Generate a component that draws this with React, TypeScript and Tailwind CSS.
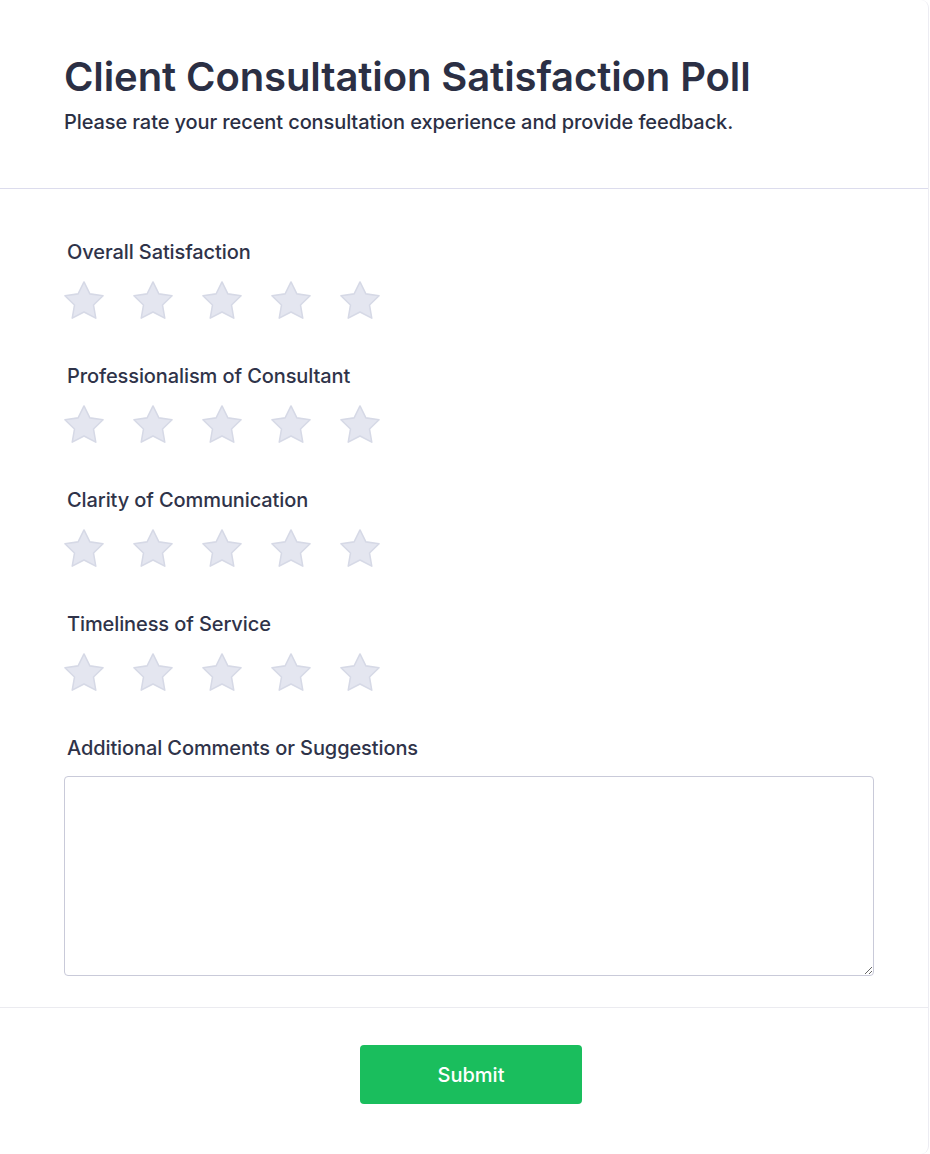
const questions = [
  'Overall Satisfaction',
  'Professionalism of Consultant',
  'Clarity of Communication',
  'Timeliness of Service',
];

const StarIcon = () => (
  <svg width="40" height="40" viewBox="1.5 1.5 21 21" className="shrink-0">
    <path
      d="M12 2l3.09 6.26L22 9.27l-5 4.87 1.18 6.88L12 17.77l-6.18 3.25L7 14.14 2 9.27l6.91-1.01L12 2z"
      fill="#e4e6f0"
      stroke="#d6d9e6"
      strokeWidth="0.8"
      strokeLinejoin="round"
    />
  </svg>
);

export default function App() {
  return (
    <div className="min-h-screen bg-white font-['Inter',sans-serif] text-[#2c3045]">
      <div className="w-[929px] rounded-lg border-r border-[#ececf2] bg-white">
        {/* Header */}
        <header className="pl-16 pr-[54px] pt-[53px] pb-[52px] border-b border-[#dcdced]">
          <h1 className="text-[40px] leading-[48px] font-semibold tracking-[-0.1px] text-[#2b2f44]">
            Client Consultation Satisfaction Poll
          </h1>
          <p className="mt-[7px] text-xl leading-7 font-medium tracking-[-0.1px] text-[#2b2f44]">
            Please rate your recent consultation experience and provide feedback.
          </p>
        </header>

        {/* Questions */}
        <main className="pl-16 pr-[54px] pt-[49px] pb-[31px] border-b border-[#ebebf0]">
          <div className="flex flex-col gap-[41px]">
            {questions.map((q) => (
              <section key={q}>
                <label className="block pl-[3px] text-xl leading-7 font-medium tracking-[-0.1px] text-[#2f3349]">
                  {q}
                </label>
                <div className="mt-[15px] flex gap-[29px]">
                  {[1, 2, 3, 4, 5].map((n) => (
                    <button key={n} type="button" className="cursor-pointer">
                      <StarIcon />
                    </button>
                  ))}
                </div>
              </section>
            ))}
            <section>
              <label className="block pl-[3px] text-xl leading-7 font-medium tracking-[-0.1px] text-[#2f3349]">
                Additional Comments or Suggestions
              </label>
              <textarea className="mt-[14px] block w-full h-[200px] rounded border border-[#c9cad9] bg-white px-3 py-2 outline-none" />
            </section>
          </div>
        </main>

        {/* Footer */}
        <footer className="flex justify-center pl-[14px] pt-[37px] pb-[50px]">
          <button
            type="button"
            className="w-[222px] h-[59px] rounded bg-[#1abe5d] text-white text-xl font-medium"
          >
            Submit
          </button>
        </footer>
      </div>
    </div>
  );
}
